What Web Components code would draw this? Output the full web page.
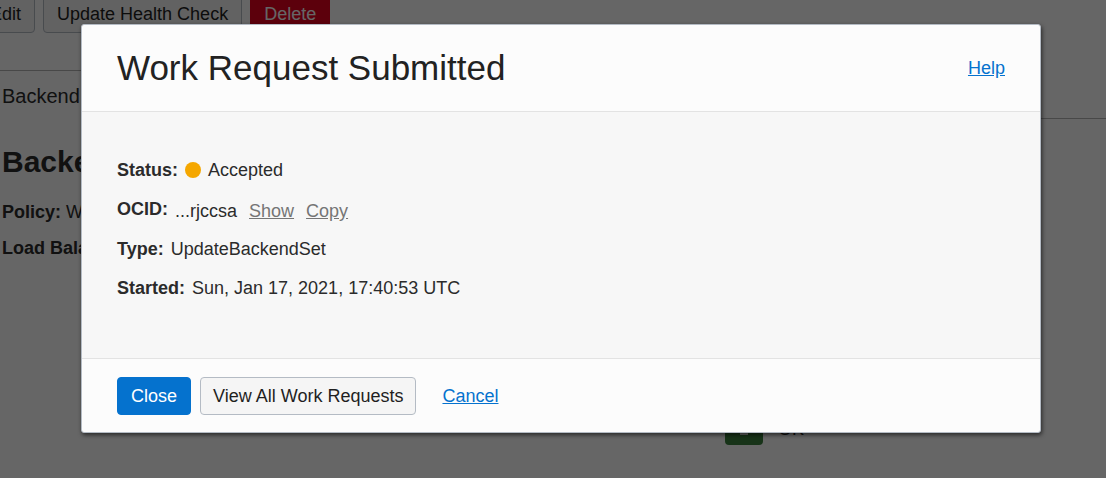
<!DOCTYPE html>
<html lang="en">
<head>
<meta charset="utf-8">
<meta name="viewport" content="width=device-width, initial-scale=1">
<title>Work Request Submitted</title>
<style>
html, body { height: 100%; }
body { margin: 0; overflow: hidden; background: #fff; color: #2b2b2b; font: 18px/20px "Liberation Sans", Arial, sans-serif; }
</style>
</head>
<body>
<backend-page></backend-page>
<modal-dialog>
  <span slot="title">Work Request Submitted</span>
  <action-link slot="help">Help</action-link>
  <detail-row label="Status:"><status-badge>Accepted</status-badge></detail-row>
  <detail-row label="OCID:"><ocid-value>...rjccsa</ocid-value></detail-row>
  <detail-row label="Type:">UpdateBackendSet</detail-row>
  <detail-row label="Started:">Sun, Jan 17, 2021, 17:40:53 UTC</detail-row>
  <action-button slot="actions" variant="primary">Close</action-button>
  <action-button slot="actions">View All Work Requests</action-button>
  <action-link slot="cancel">Cancel</action-link>
</modal-dialog>
<script>
function define(name, markup) {
  const template = document.createElement('template');
  template.innerHTML = markup;
  customElements.define(name, class extends HTMLElement {
    constructor() {
      super();
      this.attachShadow({ mode: 'open' }).append(template.content.cloneNode(true));
      const label = this.shadowRoot.querySelector('[data-label]');
      if (label) label.textContent = this.getAttribute('label') || '';
    }
  });
}

define('action-button', `
<style>
  :host { display: block; flex: none; }
  button { display: block; box-sizing: border-box; height: 38px; padding: 0 var(--button-pad, 12px); border: 1px solid #b4bbc4; border-radius: 4px; background: #f5f5f5; color: #1f1f1f; font: inherit; cursor: pointer; }
  :host([variant="primary"]) button { padding: 0 13px; background: #0572ce; border-color: #0572ce; color: #fff; }
  :host([variant="danger"]) button { background: #e5001f; border-color: #e5001f; color: #fff; border-radius: 2px; }
</style>
<button type="button"><slot></slot></button>`);

define('action-link', `
<style>
  :host { display: inline-block; }
  a { color: #0572ce; text-decoration: underline; }
  :host([muted]) a { color: #757575; }
</style>
<a href="#"><slot></slot></a>`);

define('status-badge', `
<style>
  :host { display: flex; align-items: center; gap: 7px; }
  i { width: 16px; height: 16px; border-radius: 50%; background: #f5a700; }
</style>
<i></i><span><slot></slot></span>`);

define('ocid-value', `
<style>
  :host { display: flex; gap: 12px; line-height: 24px; margin-bottom: -3px; }
</style>
<span><slot></slot></span><action-link muted>Show</action-link><action-link muted>Copy</action-link>`);

define('detail-row', `
<style>
  :host { display: flex; align-items: flex-start; gap: 7px; }
</style>
<b data-label></b><div><slot></slot></div>`);

define('modal-dialog', `
<style>
  :host { position: absolute; inset: 0; display: flex; align-items: flex-start; justify-content: center; box-sizing: border-box; padding: 24px 65px 24px 81px; background: rgba(0,0,0,.6); }
  section { flex: 1; max-width: 960px; box-sizing: border-box; border: 1px solid #b4bbc4; border-radius: 3px; background: #fcfcfc; box-shadow: 1px 2px 4px rgba(0,0,0,.6); overflow: hidden; }
  header { display: flex; justify-content: space-between; align-items: center; padding: 22px 35px; border-bottom: 1px solid #e3e3e3; }
  h1 { margin: 0; font-size: 35px; line-height: 42px; font-weight: 400; color: #222; }
  .body { display: grid; gap: 19px; padding: 48px 35px 60px; background: #f7f7f7; }
  footer { display: flex; align-items: center; gap: 9px; padding: 18px 35px 17px; border-top: 1px solid #e3e3e3; }
  .cancel { margin-left: 17px; }
</style>
<section role="dialog" aria-modal="true" aria-labelledby="title">
  <header><h1 id="title"><slot name="title"></slot></h1><slot name="help"></slot></header>
  <div class="body"><slot></slot></div>
  <footer><slot name="actions"></slot><div class="cancel"><slot name="cancel"></slot></div></footer>
</section>`);

define('backend-page', `
<style>
  :host { display: block; height: 100%; overflow: hidden; }
  .scrolled { margin-top: -5px; }
  .toolbar { --button-pad: 13px; display: flex; gap: 8px; margin-left: -24px; }
  nav { display: flex; margin-top: 37px; border-bottom: 1px solid #b4b4b4; }
  .tab { box-sizing: border-box; width: 120px; height: 49px; margin-bottom: -1px; padding: 15px 2px; border-top: 1px solid #b4b4b4; background: #fff; font-size: 20px; }
  h2 { margin: 25px 2px 0; font-size: 30px; line-height: 36px; }
  p { margin: 22px 2px 0; }
  p + p { margin-top: 16px; }
  .health { display: flex; align-items: flex-start; gap: 15px; padding: 149px 0 0 725px; }
  .icon { width: 38px; height: 38px; border-radius: 4px; background: #3b7f3d; }
  .icon svg { display: block; }
  .health span { line-height: 44px; }
</style>
<div class="scrolled">
  <div class="toolbar"><action-button>Edit</action-button><action-button>Update Health Check</action-button><action-button variant="danger">Delete</action-button></div>
  <nav><div class="tab">Backend</div></nav>
  <h2>Backe</h2>
  <p><b>Policy:</b> W</p>
  <p><b>Load Bala</b></p>
  <div class="health"><div class="icon"><svg width="38" height="38" viewBox="0 0 38 38" aria-hidden="true"><path d="M15 27h8" stroke="#fff" stroke-width="2"/></svg></div><span>OK</span></div>
</div>`);
</script>
</body>
</html>
